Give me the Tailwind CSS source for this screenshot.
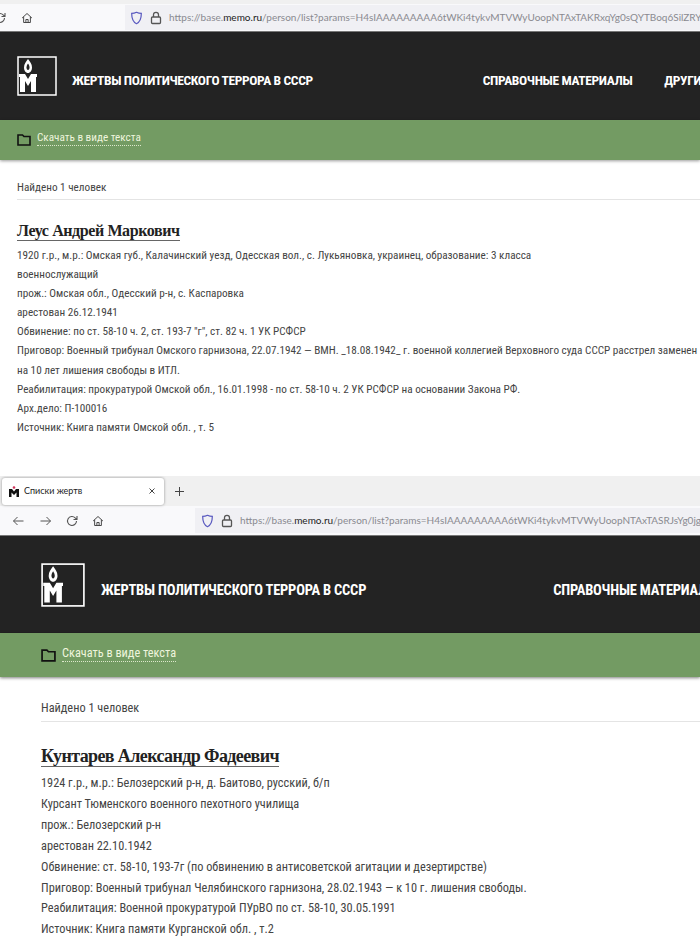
<!DOCTYPE html>
<html lang="ru">
<head>
  <meta charset="UTF-8">
  <title>Списки жертв</title>
  <script src="https://cdn.jsdelivr.net/npm/@tailwindcss/browser@4"></script>
</head>
<body class="bg-white w-[700px] h-[946px] overflow-hidden font-['Roboto',sans-serif] font-stretch-[75%]">

  <!-- first screenshot -->
  <section class="h-[476px] overflow-hidden">
    <div class="h-[32px] bg-[#f9f9fb] flex items-center border-t-[4px] border-b border-t-[#f0f0f0] border-b-[#777]">
      <svg class="w-[12px] h-[12px] -ml-[6px] shrink-0" viewBox="0 0 12 12" fill="none" stroke="#555" stroke-width="1.100"><path d="M10.500 6a4.500 4.500 0 1 1-1.300-3.200L11 4.500M11 1v3.500H7.500"/></svg>
      <svg class="w-[12px] h-[12px] ml-[15px] shrink-0" viewBox="0 0 16 16" fill="none" stroke="#444" stroke-width="1.300"><path d="M1.500 8 8 2l6.500 6M3.500 6.500V14h9V6.500M6.500 14v-4h3v4"/></svg>
      <div class="ml-[92px] flex-1 h-[25px] bg-[#f0f0f4] flex items-center overflow-hidden pl-[5px]">
        <svg class="w-[13px] h-[14px] shrink-0" viewBox="0 0 14 16" fill="none" stroke="#5a5ac0" stroke-width="1.400"><path d="M7 1.500c2 1 3.700 1.300 5.500 1.300 0 5-1 9.500-5.500 11.700C2.500 12.300 1.500 7.800 1.500 2.800 3.300 2.800 5 2.500 7 1.500Z"/></svg>
        <svg class="w-[12px] h-[14px] ml-[7px] shrink-0" viewBox="0 0 12 14" fill="none" stroke="#555" stroke-width="1.300"><rect x="1.500" y="6" width="9" height="6.500" rx="1"/><path d="M3.500 6V3.800a2.500 2.500 0 0 1 5 0V6"/></svg>
        <span class="ml-[7px] text-[10px] text-[#8a8a90] whitespace-nowrap font-['Lato',sans-serif]">https://base.<span class="text-[#222]">memo.ru</span>/person/list?params=H4sIAAAAAAAAA6tWKi4tykvMTVWyUoopNTAxTAKRxqYg0sQYTBoq6SilZRYV</span>
      </div>
    </div>

    <header class="h-[88px] bg-[#232323] flex items-center pl-[17px] whitespace-nowrap overflow-hidden">
      <svg class="w-[40px] h-[40px] shrink-0" viewBox="0 0 40 40"><rect x="1" y="1" width="38" height="38" fill="none" stroke="#fff" stroke-width="1.500"/><path fill="#fff" d="M11 3c2 3 4 5 4 8.500 0 3-1.800 5.500-4 5.500s-4-2.500-4-5.500c0-3.500 2-5.500 4-8.500Z"/><path fill="#232323" d="M11 7.500c1 1.500 1.500 2.800 1.500 4s-.6 2.500-1.500 2.500-1.500-1.300-1.500-2.500.5-2.500 1.500-4Z"/><path fill="#fff" d="M2 18h6l3 5 3-5h6v3h-1v15h-5V25l-3 5-3-5v11H3V21H2Z"/></svg>
      <span class="ml-[15px] mt-[8px] text-white font-bold text-[13.500px] tracking-[-0.38px]">ЖЕРТВЫ ПОЛИТИЧЕСКОГО ТЕРРОРА В СССР</span>
      <span class="ml-[170px] mt-[8px] text-white font-bold text-[13.500px] tracking-[-0.38px]">СПРАВОЧНЫЕ МАТЕРИАЛЫ</span>
      <span class="ml-[32px] mt-[8px] text-white font-bold text-[13.500px] tracking-[-0.38px]">ДРУГИЕ</span>
    </header>

    <div class="h-[40px] bg-[#739b63] flex items-center pl-[17px] shadow-[0_1px_3px_rgba(0,0,0,0.4)]">
      <svg class="w-[14px] h-[12px]" viewBox="0 0 14 12" fill="none" stroke="#111" stroke-width="1.600"><path d="M1 1h4.500l1.500 1.500h6V11H1Z"/></svg>
      <span class="ml-[6px] -mt-[3px] text-[11.200px] text-[#eef5dd] border-b border-dotted border-[#dde8cc] leading-[14px]">Скачать в виде текста</span>
    </div>

    <div class="ml-[17px]">
      <p class="mt-[21px] pb-[4px] text-[11.200px] leading-[14px] text-[#444] border-b border-[#e4e4e4]">Найдено 1 человек</p>
      <h2 class="mt-[22px] inline-block font-['Liberation_Serif',serif] font-bold text-[16px] tracking-[-0.4px] leading-[18px] text-[#222] border-b border-[#666]">Леус Андрей Маркович</h2>
      <div class="mt-[3px] text-[11.200px] leading-[19.100px] text-[#444] whitespace-nowrap">
        <p>1920 г.р., м.р.: Омская губ., Калачинский уезд, Одесская вол., с. Лукьяновка, украинец, образование: 3 класса</p>
        <p>военнослужащий</p>
        <p>прож.: Омская обл., Одесский р-н, с. Каспаровка</p>
        <p>арестован 26.12.1941</p>
        <p>Обвинение: по ст. 58-10 ч. 2, ст. 193-7 "г", ст. 82 ч. 1 УК РСФСР</p>
        <p>Приговор: Военный трибунал Омского гарнизона, 22.07.1942 — ВМН. _18.08.1942_ г. военной коллегией Верховного суда СССР расстрел заменен<br>на 10 лет лишения свободы в ИТЛ.</p>
        <p>Реабилитация: прокуратурой Омской обл., 16.01.1998 - по ст. 58-10 ч. 2 УК РСФСР на основании Закона РФ.</p>
        <p>Арх.дело: П-100016</p>
        <p>Источник: Книга памяти Омской обл. , т. 5</p>
      </div>
    </div>
  </section>

  <!-- second screenshot -->
  <section class="h-[470px] overflow-hidden">
    <div class="h-[30px] bg-[#f0f0f0] flex items-center">
      <div class="w-[162px] h-[27px] ml-[2px] bg-white rounded-[3px] shadow-[0_0_3px_rgba(0,0,0,0.4)] flex items-center pl-[7px]">
        <svg class="w-[10px] h-[11px] shrink-0" viewBox="0 0 10 11"><circle cx="5" cy="1.500" r="1.300" fill="#d0345a"/><path fill="#111" d="M0 3h3l2 2.500L7 3h3v8H7.500V6.500L5 9 2.500 6.500V11H0Z"/></svg>
        <span class="ml-[5px] w-[126px] text-[9px] text-[#222] font-['Lato',sans-serif]">Списки жертв</span>
        <svg class="w-[8px] h-[8px] shrink-0 -ml-[2px]" viewBox="0 0 8 8" stroke="#444" stroke-width="1"><path d="m1.500 1.500 5 5m0-5-5 5"/></svg>
      </div>
      <svg class="w-[11px] h-[11px] ml-[10px]" viewBox="0 0 11 11" stroke="#444" stroke-width="1"><path d="M5.500 1v9M1 5.500h9"/></svg>
    </div>
    <div class="h-[30px] bg-[#f9f9fb] flex items-center border-b border-[#777]">
      <svg class="w-[13px] h-[12px] ml-[12px]" viewBox="0 0 12 12" fill="none" stroke="#555" stroke-width="1"><path d="M11 6H1m4-4L1 6l4 4"/></svg>
      <svg class="w-[13px] h-[12px] ml-[14px]" viewBox="0 0 12 12" fill="none" stroke="#555" stroke-width="1"><path d="M1 6h10M7 2l4 4-4 4"/></svg>
      <svg class="w-[12px] h-[12px] ml-[14px]" viewBox="0 0 12 12" fill="none" stroke="#555" stroke-width="1.100"><path d="M10.500 6a4.500 4.500 0 1 1-1.300-3.200L11 4.500M11 1v3.500H7.500"/></svg>
      <svg class="w-[12px] h-[12px] ml-[14px]" viewBox="0 0 16 16" fill="none" stroke="#444" stroke-width="1.300"><path d="M1.500 8 8 2l6.500 6M3.500 6.500V14h9V6.500M6.500 14v-4h3v4"/></svg>
      <div class="ml-[91px] flex-1 h-[25px] bg-[#f0f0f4] flex items-center overflow-hidden pl-[6px]">
        <svg class="w-[13px] h-[14px] shrink-0" viewBox="0 0 14 16" fill="none" stroke="#5a5ac0" stroke-width="1.400"><path d="M7 1.500c2 1 3.700 1.300 5.500 1.300 0 5-1 9.500-5.500 11.700C2.500 12.300 1.500 7.800 1.500 2.800 3.300 2.800 5 2.500 7 1.500Z"/></svg>
        <svg class="w-[12px] h-[14px] ml-[7px] shrink-0" viewBox="0 0 12 14" fill="none" stroke="#555" stroke-width="1.300"><rect x="1.500" y="6" width="9" height="6.500" rx="1"/><path d="M3.500 6V3.800a2.500 2.500 0 0 1 5 0V6"/></svg>
        <span class="ml-[7px] text-[10px] text-[#8a8a90] whitespace-nowrap font-['Lato',sans-serif]">https://base.<span class="text-[#222]">memo.ru</span>/person/list?params=H4sIAAAAAAAAA6tWKi4tykvMTVWyUoopNTAxTASRJsYg0jgF</span>
      </div>
    </div>

    <header class="h-[97px] bg-[#232323] flex items-center pl-[41px] whitespace-nowrap overflow-hidden">
      <svg class="w-[44px] h-[44px] shrink-0" viewBox="0 0 40 40"><rect x="1" y="1" width="38" height="38" fill="none" stroke="#fff" stroke-width="1.500"/><path fill="#fff" d="M11 3c2 3 4 5 4 8.500 0 3-1.800 5.500-4 5.500s-4-2.500-4-5.500c0-3.500 2-5.500 4-8.500Z"/><path fill="#232323" d="M11 7.500c1 1.500 1.500 2.800 1.500 4s-.6 2.500-1.500 2.500-1.500-1.300-1.500-2.500.5-2.500 1.500-4Z"/><path fill="#fff" d="M2 18h6l3 5 3-5h6v3h-1v15h-5V25l-3 5-3-5v11H3V21H2Z"/></svg>
      <span class="ml-[16px] mt-[12px] text-white font-bold text-[14.500px] tracking-[-0.22px]">ЖЕРТВЫ ПОЛИТИЧЕСКОГО ТЕРРОРА В СССР</span>
      <span class="ml-[187px] mt-[12px] text-white font-bold text-[14.500px] tracking-[-0.22px]">СПРАВОЧНЫЕ МАТЕРИАЛЫ</span>
    </header>

    <div class="h-[44px] bg-[#739b63] flex items-center pl-[41px] shadow-[0_1px_3px_rgba(0,0,0,0.5)]">
      <svg class="w-[15px] h-[13px]" viewBox="0 0 14 12" fill="none" stroke="#111" stroke-width="1.600"><path d="M1 1h4.500l1.500 1.500h6V11H1Z"/></svg>
      <span class="ml-[6px] -mt-[2px] text-[12.300px] text-[#eef5dd] border-b border-dotted border-[#dde8cc] leading-[15px]">Скачать в виде текста</span>
    </div>

    <div class="ml-[41px]">
      <p class="mt-[24px] pb-[5px] text-[12.300px] leading-[15px] text-[#444] border-b border-[#e4e4e4]">Найдено 1 человек</p>
      <h2 class="mt-[24px] inline-block font-['Liberation_Serif',serif] font-bold text-[18px] tracking-[-0.6px] leading-[20px] text-[#222] border-b border-[#666]">Кунтарев Александр Фадеевич</h2>
      <div class="mt-[4px] text-[12.300px] leading-[20.900px] text-[#444]">
        <p>1924 г.р., м.р.: Белозерский р-н, д. Баитово, русский, б/п</p>
        <p>Курсант Тюменского военного пехотного училища</p>
        <p>прож.: Белозерский р-н</p>
        <p>арестован 22.10.1942</p>
        <p>Обвинение: ст. 58-10, 193-7г (по обвинению в антисоветской агитации и дезертирстве)</p>
        <p>Приговор: Военный трибунал Челябинского гарнизона, 28.02.1943 — к 10 г. лишения свободы.</p>
        <p>Реабилитация: Военной прокуратурой ПУрВО по ст. 58-10, 30.05.1991</p>
        <p>Источник: Книга памяти Курганской обл. , т.2</p>
      </div>
    </div>
  </section>
</body>
</html>
